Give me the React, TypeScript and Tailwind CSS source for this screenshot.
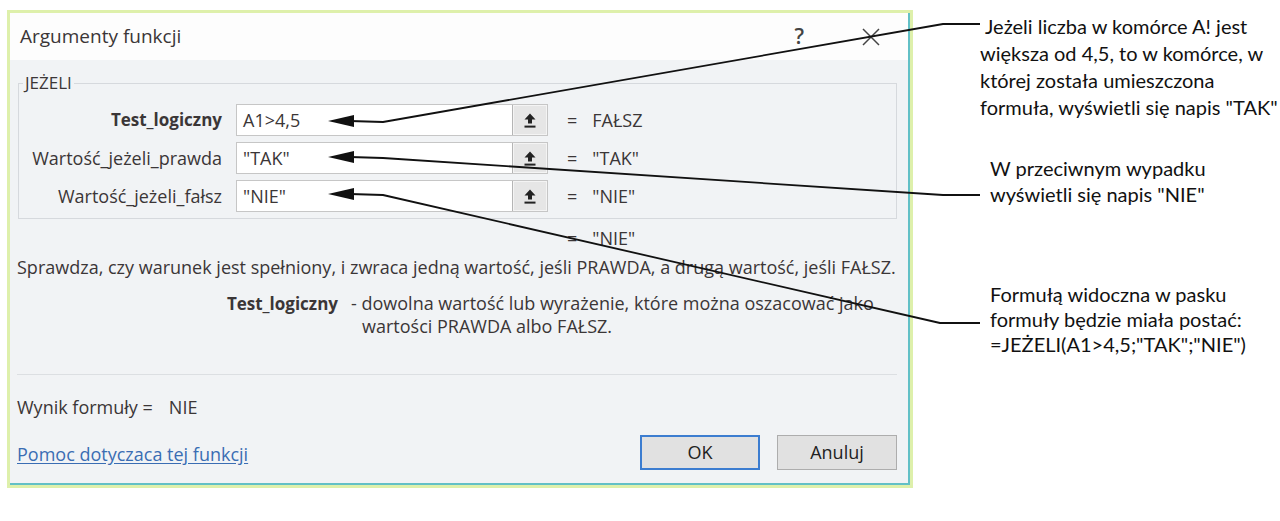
import React from "react"

const rows = [
  { label: "Test_logiczny", bold: true, value: "A1>4,5", result: "FAŁSZ" },
  { label: "Wartość_jeżeli_prawda", bold: false, value: "\"TAK\"", result: "\"TAK\"" },
  { label: "Wartość_jeżeli_fałsz", bold: false, value: "\"NIE\"", result: "\"NIE\"" },
]

const UploadIcon = () => (
  <svg width="12" height="15" viewBox="0 0 12 15" className="text-[#222]">
    <path d="M6 0.5 L11.5 6.5 H8 V10.5 H4 V6.5 H0.5 Z" fill="currentColor" />
    <rect x="0.5" y="12.6" width="11" height="2" fill="currentColor" />
  </svg>
)

const Arrows = () => (
  <svg
    className="absolute inset-0 pointer-events-none"
    width="1280"
    height="521"
    viewBox="0 0 1280 521"
  >
    <g fill="none" stroke="#111" strokeWidth="1.8" strokeLinejoin="round">
      <polyline points="350,121 383,122 943,24 980,24" />
      <polyline points="350,157 383,158 943,195 980,195" />
      <polyline points="350,194 383,195 940,323 980,323" />
    </g>
    <g fill="#111">
      <polygon points="328,121 354,115 354,127" />
      <polygon points="328,157 354,151 354,163" />
      <polygon points="328,194 354,188 354,200" />
    </g>
  </svg>
)

export default function App() {
  return (
    <div className="relative w-[1280px] h-[521px] overflow-hidden bg-white font-['Open_Sans',sans-serif]">
      <div className="flex pt-[10px] pl-[7px]">
        {/* okno dialogowe */}
        <div className="w-[906px] h-[478px] shrink-0 border-[3px] border-[#def0ab]">
          <div className="h-full flex flex-col border-r-2 border-b-2 border-[#62c0c6] bg-[#f1f3f5] text-[#3b3637]">
            <div className="h-[47px] shrink-0 bg-[#fdfdfd] flex items-center justify-between pl-[10px] pr-[28px]">
              <span className="text-[19px]">Argumenty funkcji</span>
              <div className="flex items-center gap-[58px] text-[#444]">
                <span className="text-[21px] font-semibold">?</span>
                <svg width="18" height="18" viewBox="0 0 18 18">
                  <path d="M1 1 L17 17 M17 1 L1 17" stroke="#444" strokeWidth="1.5" />
                </svg>
              </div>
            </div>

            <div className="flex-1 flex flex-col pl-[7px] pr-[11px]">
              <div className="relative mt-[23px] ml-px h-[136px] border border-[#d6d9dd] pt-[20px] flex flex-col gap-[6px]">
                <span className="absolute -top-[13px] left-[4px] px-[2px] bg-[#f1f3f5] text-[17px] leading-[24px]">
                  JEŻELI
                </span>
                {rows.map((r) => (
                  <div key={r.label} className="flex items-center h-[32px]">
                    <div
                      className={`w-[203px] text-right whitespace-nowrap ${r.bold ? "font-bold text-[17px]" : "text-[18px]"}`}
                    >
                      {r.label}
                    </div>
                    <div className="ml-[14px] w-[312px] h-[32px] flex border border-[#c6c6c6] bg-white">
                      <div className="flex-1 flex items-center pl-[6px] text-[18px]">{r.value}</div>
                      <div className="w-[35px] flex items-center justify-center bg-[#e6e6e6] border-l border-[#b5b5b5] shadow-[inset_0_0_0_1px_#f4f4f4]">
                        <UploadIcon />
                      </div>
                    </div>
                    <span className="ml-[19px] text-[18px]">=</span>
                    <span className="ml-[15px] text-[18px]">{r.result}</span>
                  </div>
                ))}
              </div>

              <div className="h-[38px] flex items-center text-[18px]">
                <span className="ml-[550px]">=</span>
                <span className="ml-[15px]">"NIE"</span>
              </div>

              <p className="h-[20px] leading-[20px] text-[18px] whitespace-nowrap">
                Sprawdza, czy warunek jest spełniony, i zwraca jedną wartość, jeśli PRAWDA, a drugą wartość, jeśli FAŁSZ.
              </p>

              <div className="mt-[15px] flex text-[18px] leading-[23px]">
                <div className="w-[321px] text-right font-bold text-[17px]">Test_logiczny</div>
                <div className="ml-[13px] whitespace-nowrap">
                  <div>- dowolna wartość lub wyrażenie, które można oszacować jako</div>
                  <div className="pl-[11px]">wartości PRAWDA albo FAŁSZ.</div>
                </div>
              </div>

              <div className="mt-[36px] h-px bg-[#dcdfe2]" />

              <div className="mt-[22px] h-[20px] leading-[20px] text-[18px] whitespace-nowrap">
                Wynik formuły =<span className="ml-[16px]">NIE</span>
              </div>

              <div className="mt-[18px] flex items-center justify-between">
                <a className="mt-[4px] text-[18px] text-[#3a6db3] underline underline-offset-2">
                  Pomoc dotyczaca tej funkcji
                </a>
                <div className="flex gap-[17px]">
                  <button className="w-[120px] h-[35px] bg-[#e1e1e1] border-2 border-[#3c7dd0] text-[18px] text-[#222]">
                    OK
                  </button>
                  <button className="w-[120px] h-[35px] bg-[#e1e1e1] border border-[#adadad] text-[18px] text-[#222]">
                    Anuluj
                  </button>
                </div>
              </div>
            </div>
          </div>
        </div>

        {/* opisy */}
        <div className="ml-[67px] flex flex-col text-[20px] text-[#111] font-['Lato',sans-serif] whitespace-nowrap">
          <div className="mt-[3px] leading-[27px]">
            <div className="pl-[5px]">Jeżeli liczba w komórce A! jest</div>
            <div>większa od 4,5, to w komórce, w</div>
            <div>której została umieszczona</div>
            <div>formuła, wyświetli się napis "TAK"</div>
          </div>
          <div className="mt-[34px] ml-[10px] leading-[26px]">
            <div>W przeciwnym wypadku</div>
            <div>wyświetli się napis "NIE"</div>
          </div>
          <div className="mt-[75px] ml-[10px] leading-[25px]">
            <div>Formułą widoczna w pasku</div>
            <div>formuły będzie miała postać:</div>
            <div>=JEŻELI(A1&gt;4,5;"TAK";"NIE")</div>
          </div>
        </div>
      </div>
      <Arrows />
    </div>
  )
}
